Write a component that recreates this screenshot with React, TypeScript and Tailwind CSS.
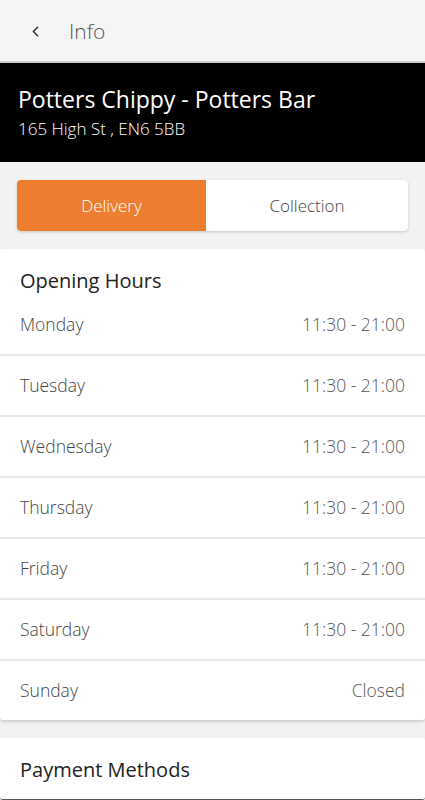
import { ChevronLeft } from 'lucide-react'

const hours = [
  { day: 'Monday', time: '11:30 - 21:00' },
  { day: 'Tuesday', time: '11:30 - 21:00' },
  { day: 'Wednesday', time: '11:30 - 21:00' },
  { day: 'Thursday', time: '11:30 - 21:00' },
  { day: 'Friday', time: '11:30 - 21:00' },
  { day: 'Saturday', time: '11:30 - 21:00' },
  { day: 'Sunday', time: 'Closed' },
]

export default function App() {
  return (
    <div
      className="h-[800px] w-[425px] overflow-hidden bg-[#f2f2f2]"
      style={{ fontFamily: '"Open Sans", "Noto Sans", sans-serif' }}
    >
      {/* Top bar */}
      <div className="flex h-[63px] items-center bg-[#f5f5f5] border-b-2 border-[#cfcfc8] pt-[2px]">
        <button type="button" className="ml-[27px] text-[#333]">
          <ChevronLeft className="h-[17px] w-[17px]" strokeWidth={2.2} />
        </button>
        <span className="ml-[25px] text-[21px] font-light text-[#555]">Info</span>
      </div>

      {/* Store banner */}
      <div className="flex h-[99px] flex-col justify-center bg-black px-[18px] pt-[2px]">
        <h1 className="text-[23px] leading-[31px] text-white">Potters Chippy - Potters Bar</h1>
        <p className="text-[17px] leading-[28px] font-light text-white">165 High St , EN6 5BB</p>
      </div>

      {/* Delivery / Collection toggle */}
      <div className="px-[17px] pt-[18px]">
        <div className="flex h-[51px] overflow-hidden rounded-[4px] bg-white shadow-[0_1px_3px_rgba(0,0,0,0.18)]">
          <button type="button" className="w-[189px] bg-[#ed7e30] text-[17px] font-light text-white">
            Delivery
          </button>
          <button type="button" className="flex-1 text-[17px] font-light text-[#444]">
            Collection
          </button>
        </div>
      </div>

      {/* Opening hours */}
      <div className="mt-[18px] rounded-[3px] bg-white shadow-[0_2px_3px_rgba(0,0,0,0.15)]">
        <div className="px-[20px] pt-[19px] text-[20px] leading-[26px] text-[#222]">Opening Hours</div>
        <ul>
          {hours.map((h, i) => (
            <li
              key={h.day}
              className={
                'flex items-center justify-between px-[20px] text-[17.5px] font-light text-[#444] ' +
                (i === 0 ? 'h-[60px]' : 'h-[61px] border-t-2 border-[#e8e8e8]')
              }
            >
              <span>{h.day}</span>
              <span className="text-[#555]">{h.time}</span>
            </li>
          ))}
        </ul>
      </div>

      {/* Payment methods */}
      <div className="mt-[18px] h-[62px] rounded-[3px] bg-white border-b border-[#555]">
        <div className="px-[20px] pt-[19px] text-[20px] leading-[26px] text-[#222]">Payment Methods</div>
      </div>
    </div>
  )
}
